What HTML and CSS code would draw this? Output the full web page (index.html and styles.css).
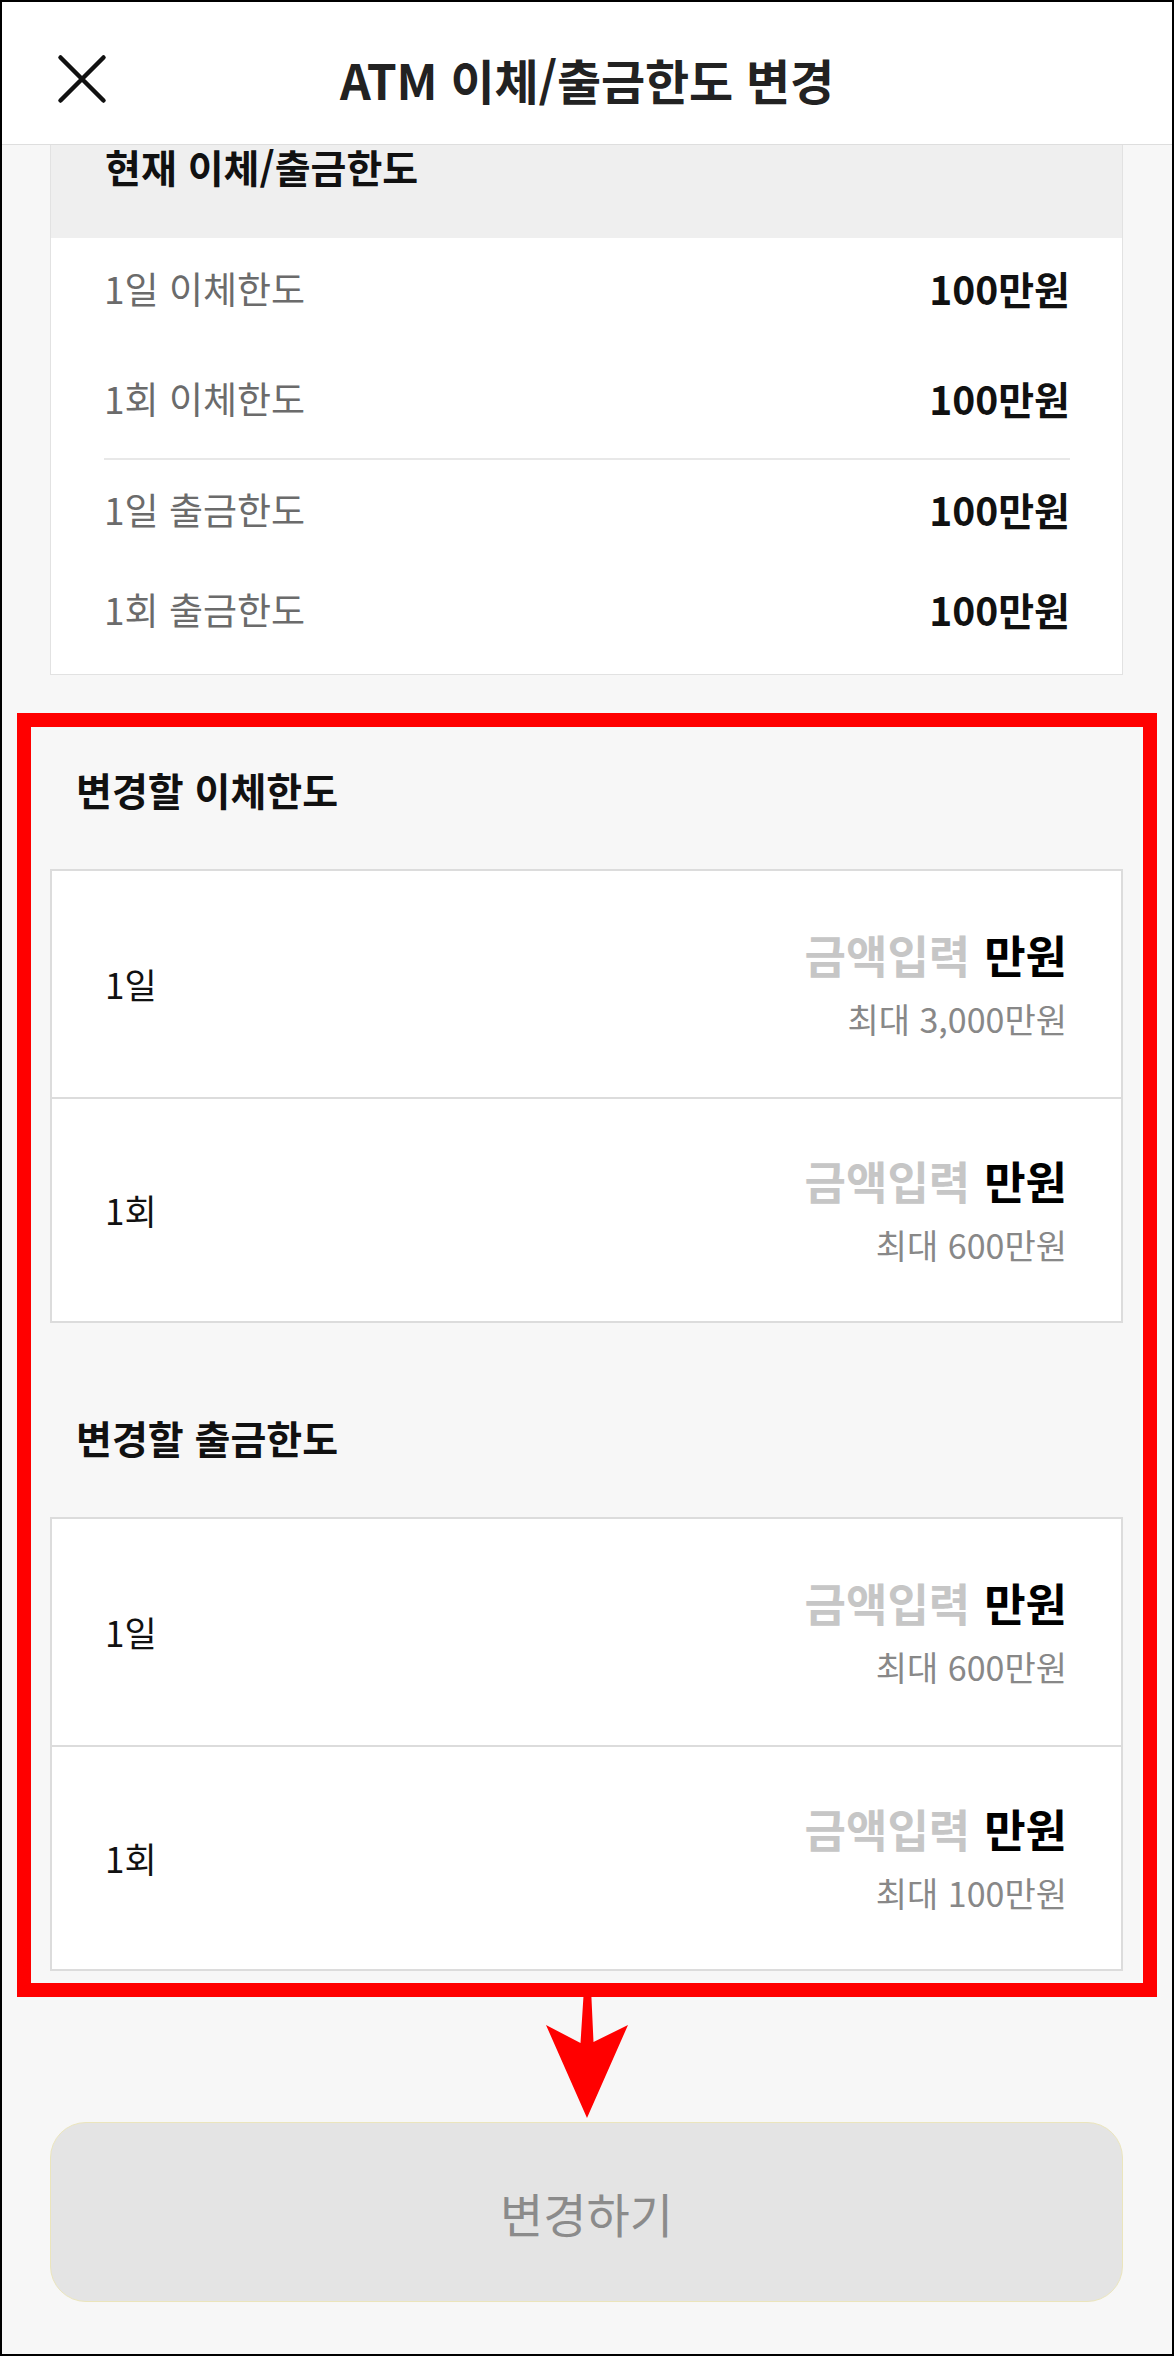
FILE: index.html
```html
<!DOCTYPE html>
<html lang="ko">
<head>
<meta charset="utf-8">
<title>ATM 이체/출금한도 변경</title>
<link rel="stylesheet" href="styles.css">
</head>
<body>
<div class="screen">
  <header class="topbar">
    <button class="close" type="button" aria-label="닫기">
      <svg viewBox="0 0 52 52" width="52" height="52"><path d="M4.5 4.5 L47.5 47.5 M47.5 4.5 L4.5 47.5" stroke="#111" stroke-width="4.5" stroke-linecap="round" fill="none"/></svg>
    </button>
    <h1 class="title">ATM 이체/출금한도 변경</h1>
    <span class="spacer"></span>
  </header>

  <main class="content">
    <section class="current">
      <div class="current-head">현재 이체/출금한도</div>
      <div class="current-group first">
        <div class="current-row"><span class="k">1일 이체한도</span><span class="v">100만원</span></div>
        <div class="current-row"><span class="k">1회 이체한도</span><span class="v">100만원</span></div>
      </div>
      <div class="current-group second">
        <div class="current-row"><span class="k">1일 출금한도</span><span class="v">100만원</span></div>
        <div class="current-row"><span class="k">1회 출금한도</span><span class="v">100만원</span></div>
      </div>
    </section>

    <h2 class="section-title">변경할 이체한도</h2>
    <div class="input-card">
      <div class="input-row">
        <span class="input-label">1일</span>
        <div class="input-right">
          <div class="amount"><span class="ph">금액입력</span><span class="unit">만원</span></div>
          <div class="max">최대 3,000만원</div>
        </div>
      </div>
      <div class="input-row">
        <span class="input-label">1회</span>
        <div class="input-right">
          <div class="amount"><span class="ph">금액입력</span><span class="unit">만원</span></div>
          <div class="max">최대 600만원</div>
        </div>
      </div>
    </div>

    <h2 class="section-title">변경할 출금한도</h2>
    <div class="input-card">
      <div class="input-row">
        <span class="input-label">1일</span>
        <div class="input-right">
          <div class="amount"><span class="ph">금액입력</span><span class="unit">만원</span></div>
          <div class="max">최대 600만원</div>
        </div>
      </div>
      <div class="input-row">
        <span class="input-label">1회</span>
        <div class="input-right">
          <div class="amount"><span class="ph">금액입력</span><span class="unit">만원</span></div>
          <div class="max">최대 100만원</div>
        </div>
      </div>
    </div>

    <button class="submit" type="button">변경하기</button>
  </main>

  <div class="annot-box"></div>
  <svg class="annot-arrow" viewBox="542 1986 92 136" width="92" height="136">
    <polygon points="584,1988 591,1988 593.5,2042 628,2025 587,2118 546,2025 580.5,2043" fill="#ff0000"/>
  </svg>
</div>
</body>
</html>
```

FILE: styles.css
```css
* {
  box-sizing: border-box;
}

html, body {
  margin: 0;
  padding: 0;
  background: #f7f7f7;
}

body {
  font-family: "Noto Sans CJK KR", "Noto Sans", sans-serif;
  color: #111;
}

.screen {
  position: relative;
  width: 1174px;
  height: 2356px;
  border: 2px solid #000;
  background: #f7f7f7;
  overflow: hidden;
}

/* header */
.topbar {
  height: 143px;
  padding: 11px 54px 0 54px;
  background: #fff;
  border-bottom: 1px solid #dedede;
  display: grid;
  grid-template-columns: 1fr auto 1fr;
  align-items: center;
}

.close {
  justify-self: start;
  width: 52px;
  height: 52px;
  padding: 0;
  border: 0;
  background: none;
  display: flex;
}

.title {
  margin: 0;
  font-size: 48px;
  line-height: 56px;
  font-weight: 700;
  color: #222;
  letter-spacing: -0.2px;
}

/* content */
.content {
  padding: 0 49px 0 48px;
  display: flex;
  flex-direction: column;
}

.current {
  background: #fff;
  border: 1px solid #e2e2e2;
  border-top: 0;
}

.current-head {
  height: 93px;
  padding: 1px 0 0 54px;
  background: #efefef;
  font-size: 39px;
  line-height: 40px;
  font-weight: 700;
  color: #111;
}

.current-group {
  margin: 0 52px 0 53px;
  display: flex;
  flex-direction: column;
}

.current-group.first {
  padding: 28px 0 38px;
  gap: 66px;
  border-bottom: 2px solid #e8e8e8;
}

.current-group.second {
  padding: 27px 0 43px;
  gap: 56px;
}

.current-row {
  display: flex;
  justify-content: space-between;
  align-items: center;
  height: 44px;
}

.current-row .k {
  font-size: 37px;
  line-height: 44px;
  color: #6b6b6b;
}

.current-row .v {
  font-size: 39px;
  line-height: 44px;
  font-weight: 700;
  color: #111;
}

.section-title {
  margin: 90px 0 56px 26px;
  font-size: 39px;
  line-height: 48px;
  font-weight: 700;
  color: #111;
}

.input-card {
  background: #fff;
  border: 2px solid #dcdcdc;
}

.input-row {
  height: 226px;
  padding: 0 54px 0 53px;
  display: flex;
  justify-content: space-between;
  align-items: center;
}

.input-row + .input-row {
  height: 224px;
  border-top: 2px solid #dcdcdc;
}

.input-label {
  font-size: 35px;
  line-height: 44px;
  color: #111;
}

.input-right {
  display: flex;
  flex-direction: column;
  align-items: flex-end;
  gap: 18px;
}

.amount {
  display: flex;
  align-items: center;
  gap: 14px;
  font-size: 45px;
  line-height: 52px;
  font-weight: 700;
}

.amount .ph {
  color: #c6c6c6;
}

.amount .unit {
  color: #000;
}

.max {
  font-size: 34px;
  line-height: 40px;
  color: #888;
}

.submit {
  margin-top: 151px;
  height: 180px;
  width: 100%;
  border: 1px solid #ebe5bc;
  border-radius: 36px;
  background: #e4e4e4;
  font-family: "Noto Sans CJK KR", "Noto Sans", sans-serif;
  font-size: 47px;
  font-weight: 400;
  color: #8b8b8b;
  padding: 0;
}

/* annotation overlays */
.annot-box {
  position: absolute;
  left: 15px;
  top: 711px;
  width: 1140px;
  height: 1284px;
  border: 14px solid #ff0000;
  pointer-events: none;
}

.annot-arrow {
  position: absolute;
  left: 540px;
  top: 1984px;
  pointer-events: none;
}
```
